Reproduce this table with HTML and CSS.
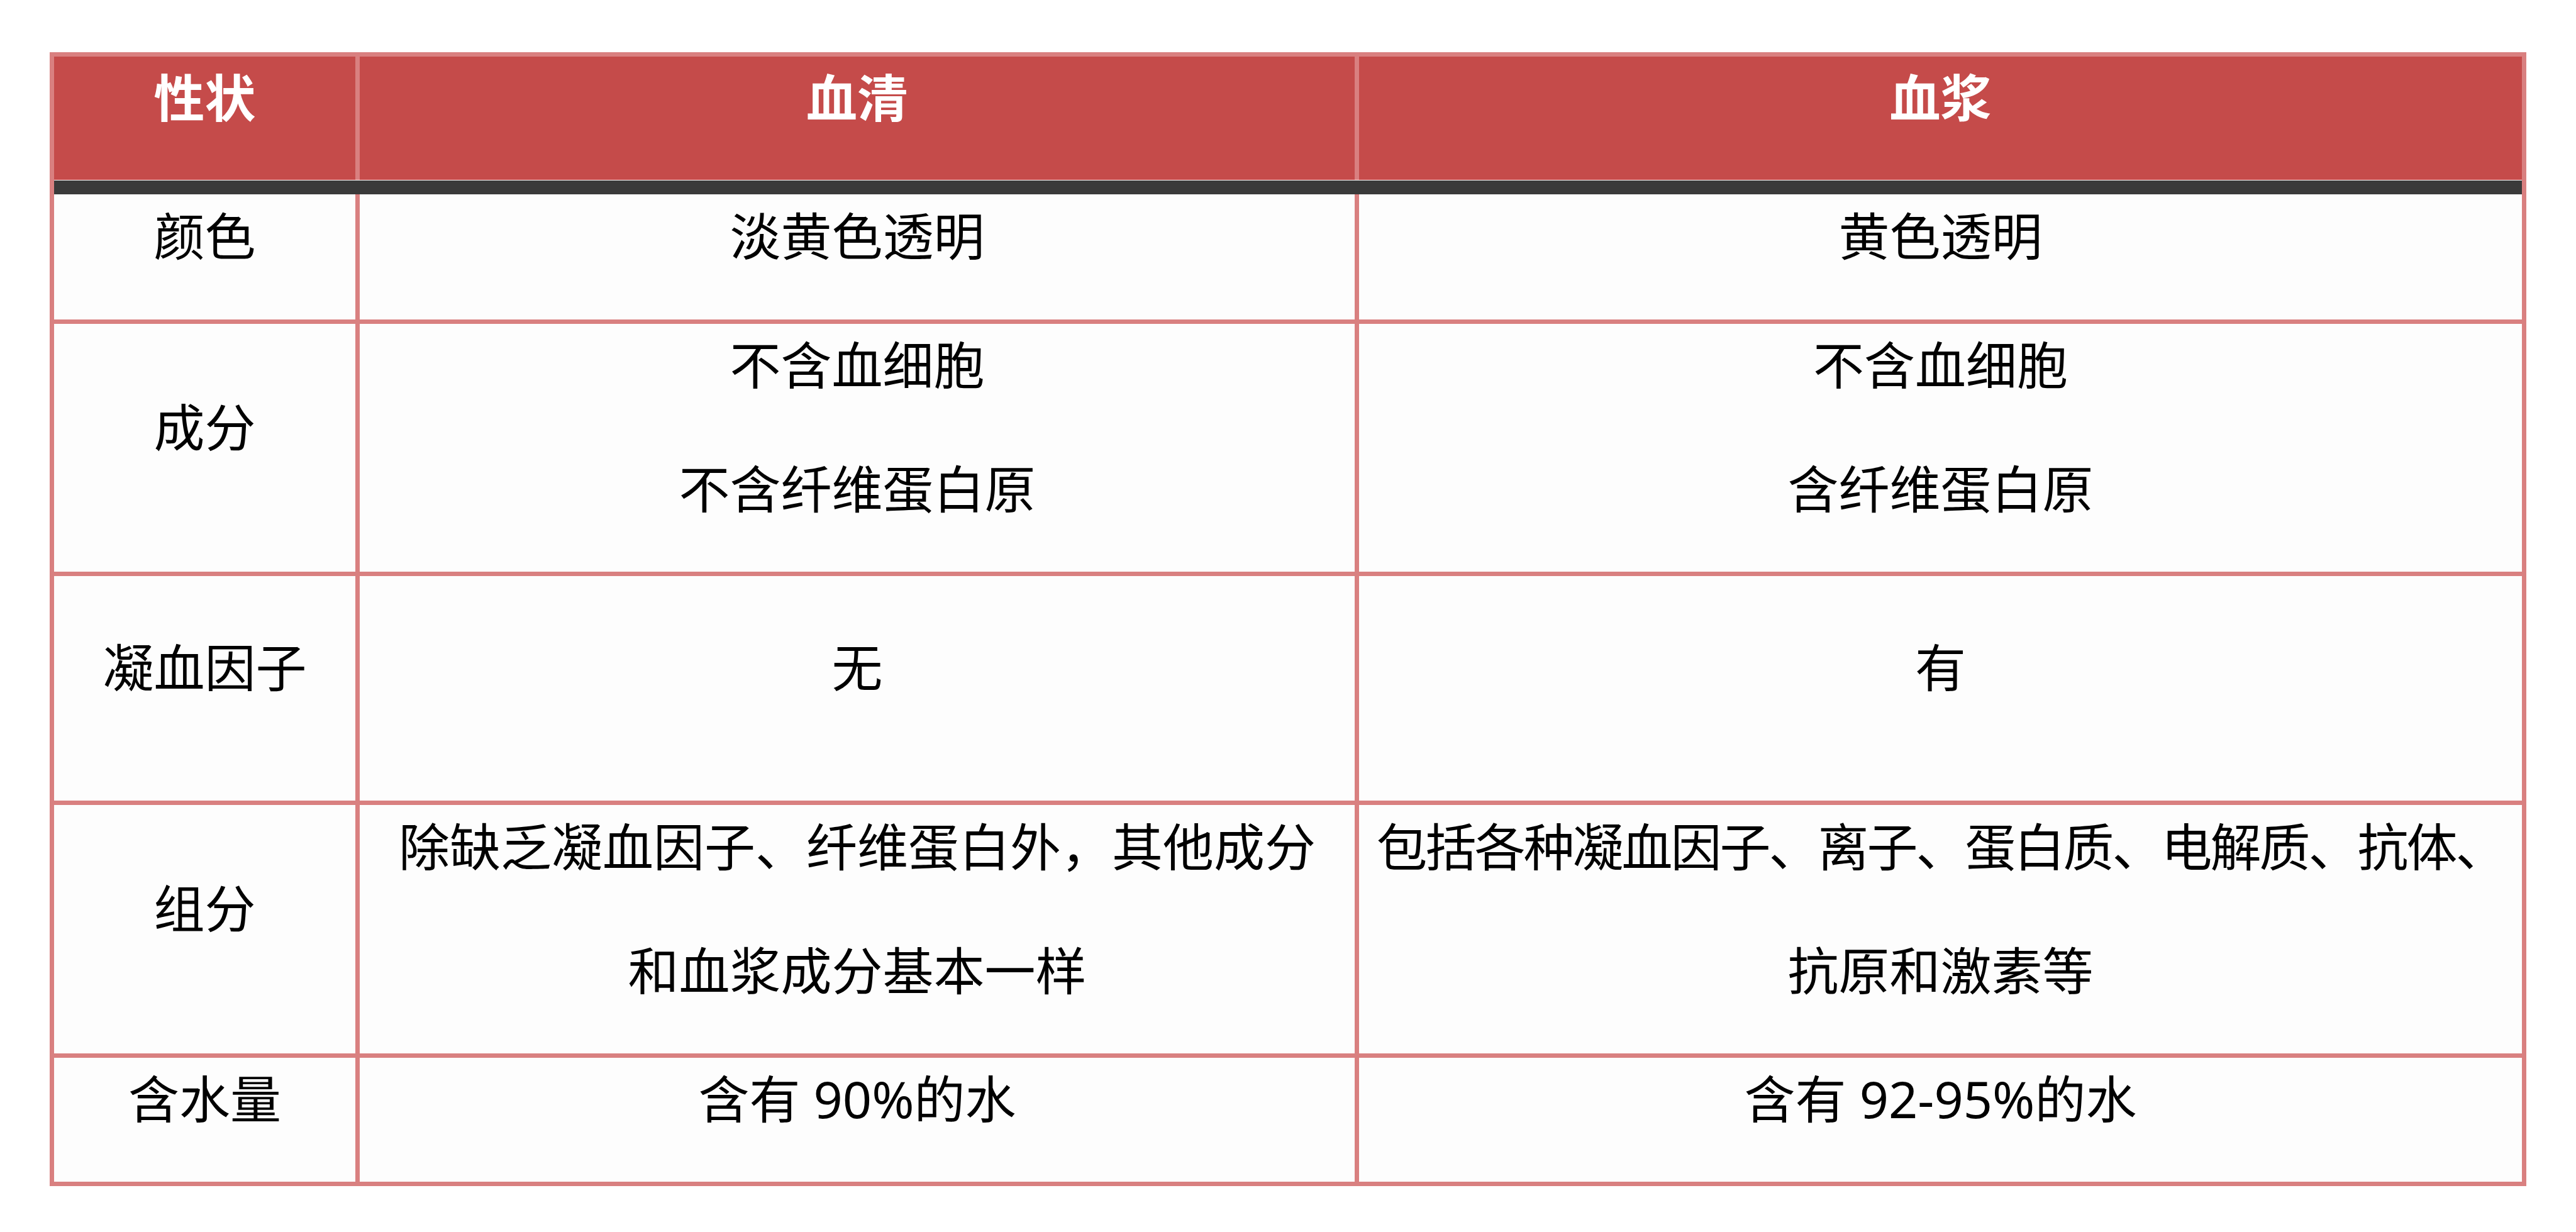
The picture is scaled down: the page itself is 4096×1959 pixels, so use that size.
FILE: index.html
```html
<!DOCTYPE html>
<html lang="zh-CN">
<head>
<meta charset="utf-8">
<title>血清与血浆</title>
<link rel="stylesheet" href="styles.css">
</head>
<body>
<div class="table">
  <div class="grid head">
    <div class="cell"><p>性状</p></div>
    <div class="cell"><p>血清</p></div>
    <div class="cell"><p>血浆</p></div>
  </div>
  <div class="band"></div>
  <div class="grid body">
    <div class="cell r1"><p>颜色</p></div>
    <div class="cell r1"><p>淡黄色透明</p></div>
    <div class="cell r1"><p>黄色透明</p></div>

    <div class="cell r2"><p>成分</p></div>
    <div class="cell r2"><p>不含血细胞</p><p>不含纤维蛋白原</p></div>
    <div class="cell r2"><p>不含血细胞</p><p>含纤维蛋白原</p></div>

    <div class="cell r3"><p>凝血因子</p></div>
    <div class="cell r3"><p>无</p></div>
    <div class="cell r3"><p>有</p></div>

    <div class="cell r4"><p>组分</p></div>
    <div class="cell r4"><p>除缺乏凝血因子、纤维蛋白外，其他成分</p><p>和血浆成分基本一样</p></div>
    <div class="cell r4"><p class="tight">包括各种凝血因子、离子、蛋白质、电解质、抗体、</p><p>抗原和激素等</p></div>

    <div class="cell r5"><p>含水量</p></div>
    <div class="cell r5"><p>含有 90%的水</p></div>
    <div class="cell r5"><p>含有 92-95%的水</p></div>
  </div>
</div>
</body>
</html>
```

FILE: styles.css
```css
html, body {
  margin: 0;
  padding: 0;
  background: #ffffff;
}

body {
  font-family: "Noto Sans", "Noto Sans CJK SC", sans-serif;
  color: #000000;
}

.table {
  margin: 83px 0 0 79px;
  width: 3924px;
  border: 7px solid #d98080;
  background: #d98080;
}

.grid {
  display: grid;
  grid-template-columns: 479px 1582px 1849px;
  column-gap: 7px;
  row-gap: 7px;
  background: #d98080;
}

.head {
  grid-template-rows: 196px;
}

.body {
  grid-template-rows: 199px 394px 357px 395px 197px;
}

.band {
  height: 22px;
  border-top: 1px solid #ffffff;
  background: #3a3a3a;
}

.cell {
  display: flex;
  flex-direction: column;
  justify-content: center;
  align-items: center;
  padding-bottom: 8px;
  background: #fdfdfd;
  font-size: 81px;
  overflow: visible;
}

.head .cell {
  background: #c54b4a;
  color: #ffffff;
  font-weight: 700;
}

.cell p {
  margin: 0 0 60px 0;
  line-height: 137px;
  text-align: center;
  white-space: nowrap;
}

.cell p.tight {
  letter-spacing: -3px;
}
```
